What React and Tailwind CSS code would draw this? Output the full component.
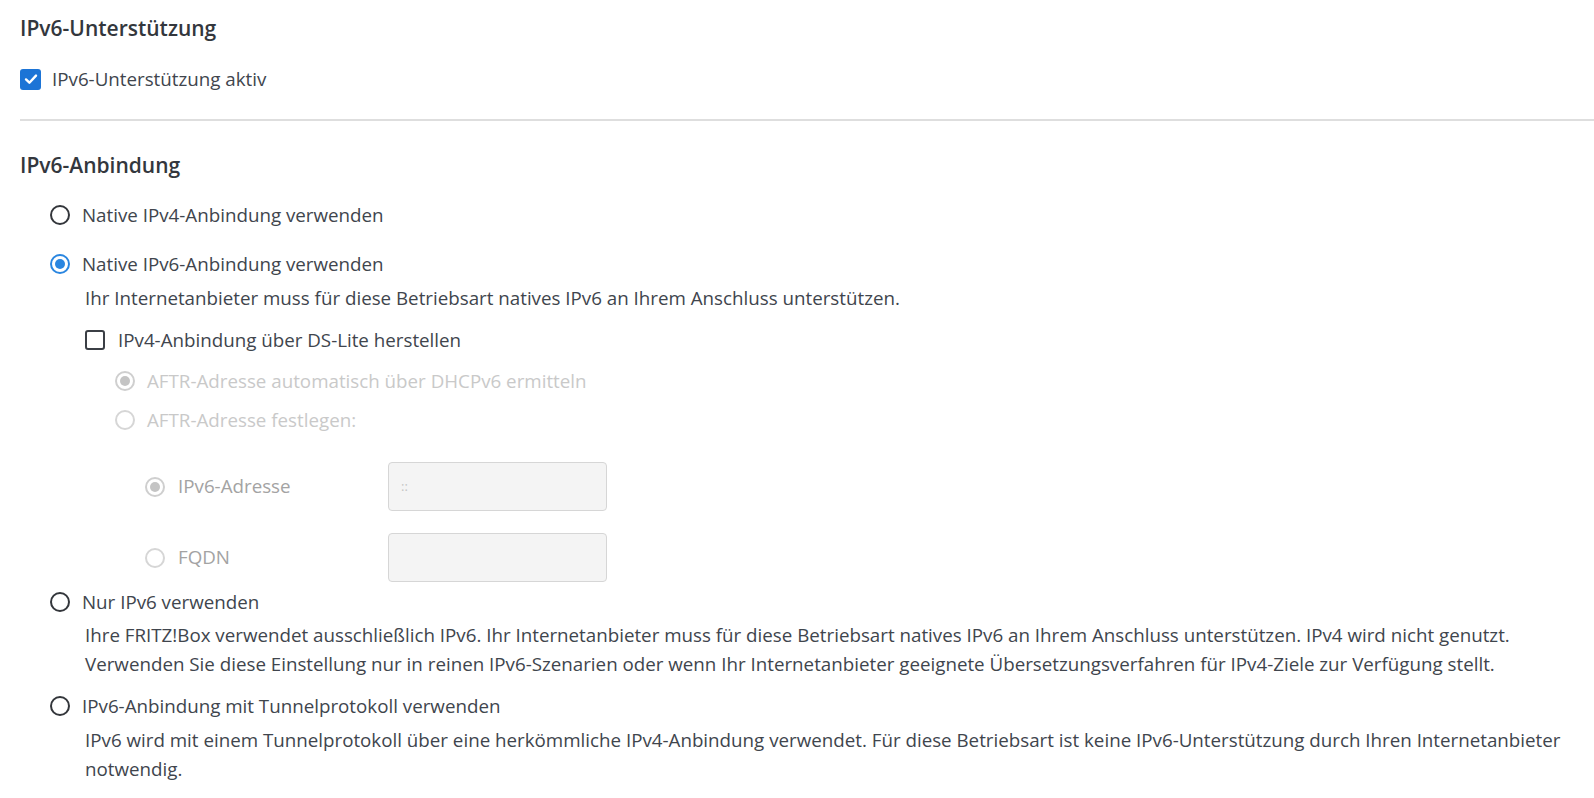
import React, { useState } from 'react'

const font = { fontFamily: '"Open Sans", "Liberation Sans", sans-serif' }

function Checkbox({ checked }) {
  if (checked) {
    return (
      <span className="flex h-[21px] w-[21px] shrink-0 items-center justify-center rounded-[3px] bg-[#1c74d6]">
        <svg width="16" height="16" viewBox="0 0 16 16" fill="none">
          <path d="M3 8.4l3.4 3.3L13 4.6" stroke="#fff" strokeWidth="2.4" strokeLinecap="round" strokeLinejoin="round" />
        </svg>
      </span>
    )
  }
  return <span className="h-[20px] w-[20px] shrink-0 rounded-[3px] border-2 border-[#3b3f45] bg-white" />
}

function Radio({ checked, disabled }) {
  let ring = 'border-[#33363b]'
  let dot = 'bg-[#2a86e0]'
  if (checked && !disabled) ring = 'border-[#2a86e0]'
  if (disabled) {
    ring = checked ? 'border-[#cfcfcf]' : 'border-[#d6d6d6]'
    dot = 'bg-[#c4c4c4]'
  }
  return (
    <span className={`flex h-[20px] w-[20px] shrink-0 items-center justify-center rounded-full border-2 bg-white ${ring}`}>
      {checked && <span className={`h-[10px] w-[10px] rounded-full ${dot}`} />}
    </span>
  )
}

export default function App() {
  const [support, setSupport] = useState(true)
  const [mode] = useState('native6')

  return (
    <div className="min-h-[798px] bg-white pl-[20px] pt-[14px] text-[18.75px] text-[#40454d]" style={font}>
      <h2 className="h-[28px] text-[21px] font-semibold leading-[28px] text-[#33373d]">IPv6-Unterstützung</h2>

      <label className="mt-[23px] flex h-[28px] items-center gap-[11px]" onClick={() => setSupport(!support)}>
        <span className="flex"><Checkbox checked={support} /></span>
        <span>IPv6-Unterstützung aktiv</span>
      </label>

      <div className="mt-[26px] h-[2px] bg-[#dedede]" />

      <h2 className="mt-[30px] h-[28px] text-[21px] font-semibold leading-[28px] text-[#33373d]">IPv6-Anbindung</h2>

      <div className="pl-[30px]">
        <div className="mt-[22px] flex h-[28px] items-center gap-[12px]">
          <Radio checked={mode === 'native4'} />
          <span>Native IPv4-Anbindung verwenden</span>
        </div>

        <div className="mt-[21px] flex h-[28px] items-center gap-[12px]">
          <Radio checked={mode === 'native6'} />
          <span>Native IPv6-Anbindung verwenden</span>
        </div>
        <div className="pl-[35px]">
          <p className="mt-[6px] leading-[28px]">
            Ihr Internetanbieter muss für diese Betriebsart natives IPv6 an Ihrem Anschluss unterstützen.
          </p>

          <div className="mt-[14px] flex h-[28px] items-center gap-[13px]">
            <Checkbox checked={false} />
            <span>IPv4-Anbindung über DS-Lite herstellen</span>
          </div>

          <div className="pl-[30px]">
            <div className="mt-[13px] flex h-[28px] items-center gap-[12px] text-[#c9c9c9]">
              <Radio checked disabled />
              <span>AFTR-Adresse automatisch über DHCPv6 ermitteln</span>
            </div>
            <div className="mt-[11px] flex h-[28px] items-center gap-[12px] text-[#c9c9c9]">
              <Radio disabled />
              <span>AFTR-Adresse festlegen:</span>
            </div>

            <div className="pl-[30px]">
              <div className="mt-[28px] flex h-[49px] items-center">
                <div className="flex w-[243px] items-center gap-[13px] text-[#a3a3a3]">
                  <Radio checked disabled />
                  <span>IPv6-Adresse</span>
                </div>
                <div className="flex h-[49px] w-[219px] items-center rounded-[4px] border border-[#d6d6d6] bg-[#f4f4f4] px-[12px] text-[13px] text-[#c4c4c4]">
                  ::
                </div>
              </div>
              <div className="mt-[22px] flex h-[49px] items-center">
                <div className="flex w-[243px] items-center gap-[13px] text-[#a3a3a3]">
                  <Radio disabled />
                  <span>FQDN</span>
                </div>
                <div className="h-[49px] w-[219px] rounded-[4px] border border-[#d6d6d6] bg-[#f4f4f4]" />
              </div>
            </div>
          </div>
        </div>

        <div className="mt-[6px] flex h-[28px] items-center gap-[12px]">
          <Radio checked={mode === 'only6'} />
          <span>Nur IPv6 verwenden</span>
        </div>
        <p className="mt-[5px] pl-[35px] leading-[28.5px]">
          Ihre FRITZ!Box verwendet ausschließlich IPv6. Ihr Internetanbieter muss für diese Betriebsart natives IPv6 an Ihrem Anschluss unterstützen. IPv4 wird nicht genutzt.
          <br />
          Verwenden Sie diese Einstellung nur in reinen IPv6-Szenarien oder wenn Ihr Internetanbieter geeignete Übersetzungsverfahren für IPv4-Ziele zur Verfügung stellt.
        </p>

        <div className="mt-[14px] flex h-[28px] items-center gap-[12px]">
          <Radio checked={mode === 'tunnel'} />
          <span>IPv6-Anbindung mit Tunnelprotokoll verwenden</span>
        </div>
        <p className="mt-[6px] pl-[35px] leading-[28.5px]">
          IPv6 wird mit einem Tunnelprotokoll über eine herkömmliche IPv4-Anbindung verwendet. Für diese Betriebsart ist keine IPv6-Unterstützung durch Ihren Internetanbieter
          <br />
          notwendig.
        </p>
      </div>
    </div>
  )
}
